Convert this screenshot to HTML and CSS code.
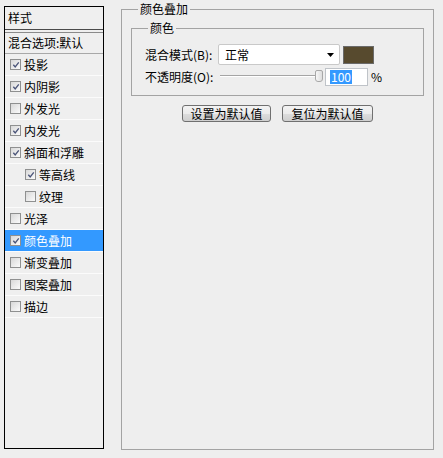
FILE: index.html
```html
<!DOCTYPE html>
<html lang="zh-CN">
<head>
<meta charset="utf-8">
<title>颜色叠加</title>
<link rel="stylesheet" href="styles.css">
</head>
<body>
<div class="dialog">
  <div class="styles-panel">
    <div class="panel-head">样式</div>
    <div class="blend-row">混合选项:默认</div>
    <ul class="style-list">
      <li class="item"><span class="cb"><svg viewBox="0 0 9 9" class="tick"><path d="M1.5 4.2 L3.6 6.6 L7.6 1.6"/></svg></span>投影</li>
      <li class="item"><span class="cb"><svg viewBox="0 0 9 9" class="tick"><path d="M1.5 4.2 L3.6 6.6 L7.6 1.6"/></svg></span>内阴影</li>
      <li class="item"><span class="cb"></span>外发光</li>
      <li class="item"><span class="cb"><svg viewBox="0 0 9 9" class="tick"><path d="M1.5 4.2 L3.6 6.6 L7.6 1.6"/></svg></span>内发光</li>
      <li class="item"><span class="cb"><svg viewBox="0 0 9 9" class="tick"><path d="M1.5 4.2 L3.6 6.6 L7.6 1.6"/></svg></span>斜面和浮雕</li>
      <li class="item sub"><span class="cb"><svg viewBox="0 0 9 9" class="tick"><path d="M1.5 4.2 L3.6 6.6 L7.6 1.6"/></svg></span>等高线</li>
      <li class="item sub"><span class="cb"></span>纹理</li>
      <li class="item"><span class="cb"></span>光泽</li>
      <li class="item active"><span class="cb"><svg viewBox="0 0 9 9" class="tick"><path d="M1.5 4.2 L3.6 6.6 L7.6 1.6"/></svg></span>颜色叠加</li>
      <li class="item"><span class="cb"></span>渐变叠加</li>
      <li class="item"><span class="cb"></span>图案叠加</li>
      <li class="item"><span class="cb"></span>描边</li>
    </ul>
  </div>

  <div class="group outer">
    <span class="legend">颜色叠加</span>
    <div class="group inner">
      <span class="legend">颜色</span>
      <div class="field-row">
        <span class="label">混合模式(B):</span>
        <div class="select">
          <span>正常</span>
          <svg class="arrow" viewBox="0 0 7 4"><path d="M0 0 H7 L3.5 4 Z"/></svg>
        </div>
        <div class="swatch"></div>
      </div>
      <div class="field-row row2">
        <span class="label">不透明度(O):</span>
        <div class="slider">
          <div class="track"></div>
          <div class="thumb"></div>
        </div>
        <div class="num"><span class="sel">100</span></div>
        <span class="pct">%</span>
      </div>
    </div>
    <div class="buttons">
      <button class="btn btn-a">设置为默认值</button>
      <button class="btn btn-b">复位为默认值</button>
    </div>
  </div>
</div>
</body>
</html>
```

FILE: styles.css
```css
html, body {
  margin: 0;
  background: #eeeeee;
}

body {
  font-family: "Noto Sans CJK SC", "Noto Sans", sans-serif;
  font-size: 12px;
  line-height: 16px;
  color: #000;
}

.dialog {
  display: flex;
  align-items: flex-start;
  padding: 6px 0 0 4px;
  height: 458px;
  box-sizing: border-box;
}

/* ---------- left style list ---------- */
.styles-panel {
  width: 100px;
  height: 443px;
  box-sizing: border-box;
  border: 1px solid #000;
  background: #efefef;
  flex: none;
}

.panel-head {
  height: 22px;
  line-height: 22px;
  padding-left: 3px;
  border-bottom: 1px solid #4a4a4a;
}

.blend-row {
  margin-top: 2px;
  height: 20px;
  line-height: 20px;
  padding-left: 3px;
  border-top: 1px solid #8a8a8a;
  border-bottom: 1px solid #a8a8a8;
  white-space: nowrap;
}

.style-list {
  list-style: none;
  margin: 0;
  padding: 0;
}

.item {
  display: flex;
  align-items: center;
  gap: 3px;
  height: 21px;
  padding-left: 5px;
  border-bottom: 1px solid #fbfbfb;
  white-space: nowrap;
}

.item.sub {
  padding-left: 20px;
}

.item.active {
  background: #3399ff;
  color: #fff;
}

.cb {
  width: 11px;
  height: 11px;
  box-sizing: border-box;
  border: 1px solid #8f9090;
  background: linear-gradient(135deg, #d8d8d8, #fbfbfb);
  display: flex;
  align-items: center;
  justify-content: center;
  flex: none;
}

.tick {
  width: 8px;
  height: 8px;
  fill: none;
  stroke: #4a5478;
  stroke-width: 1.5;
}

/* ---------- right group boxes ---------- */
.group {
  position: relative;
  box-sizing: border-box;
  border: 1px solid #a3a3a3;
}

.legend {
  position: absolute;
  top: -9px;
  left: 16px;
  padding: 0 2px;
  line-height: 16px;
  background: #eeeeee;
  white-space: nowrap;
}

.outer {
  margin: 3px 0 0 17px;
  width: 313px;
  height: 441px;
  flex: none;
}

.inner {
  margin: 18px 0 0 9px;
  width: 293px;
  height: 68px;
  padding: 15px 0 0 13px;
}

.field-row {
  display: flex;
  align-items: center;
  height: 21px;
}

.label {
  width: 73px;
  flex: none;
  white-space: nowrap;
}

.select {
  width: 122px;
  height: 21px;
  box-sizing: border-box;
  border: 1px solid #c9c9c9;
  border-radius: 2px;
  background: #fff;
  display: flex;
  align-items: center;
  justify-content: space-between;
  padding: 0 5px 0 6px;
}

.arrow {
  width: 7px;
  height: 4px;
  fill: #000;
}

.swatch {
  margin-left: 3px;
  width: 31px;
  height: 18px;
  box-sizing: border-box;
  border: 1px solid #6a6a6a;
  background: #574a2e;
}

.row2 {
  margin-top: 3px;
  height: 18px;
}

.slider {
  position: relative;
  margin-left: 2px;
  width: 103px;
  height: 18px;
}

.track {
  position: absolute;
  left: 0;
  right: 4px;
  top: 7px;
  height: 0;
  border-top: 1px solid #a5a5a5;
  border-bottom: 1px solid #ffffff;
}

.thumb {
  position: absolute;
  right: 0;
  top: 2px;
  width: 8px;
  height: 12px;
  box-sizing: border-box;
  border: 1px solid #a8a8a8;
  border-radius: 2px 2px 3px 3px;
  background: linear-gradient(90deg, #f7f7f7, #dedede);
}

.num {
  margin-left: 2px;
  width: 43px;
  height: 18px;
  box-sizing: border-box;
  border: 1px solid #bfc3c8;
  background: #fff;
  padding-left: 4px;
  display: flex;
  align-items: center;
}

.sel {
  background: #3399ff;
  color: #fff;
  line-height: 14px;
  padding: 0 1px;
}

.pct {
  margin-left: 3px;
}

.buttons {
  display: flex;
  justify-content: center;
  gap: 11px;
  margin-top: 9px;
}

.btn {
  height: 17px;
  padding: 0;
  font: inherit;
  line-height: 15px;
  color: #000;
  border: 1px solid #707070;
  border-radius: 3px;
  background: linear-gradient(#f3f3f3, #ebebeb 50%, #dddddd 51%, #cfcfcf);
}

.btn-a {
  width: 89px;
}

.btn-b {
  width: 91px;
}
```
